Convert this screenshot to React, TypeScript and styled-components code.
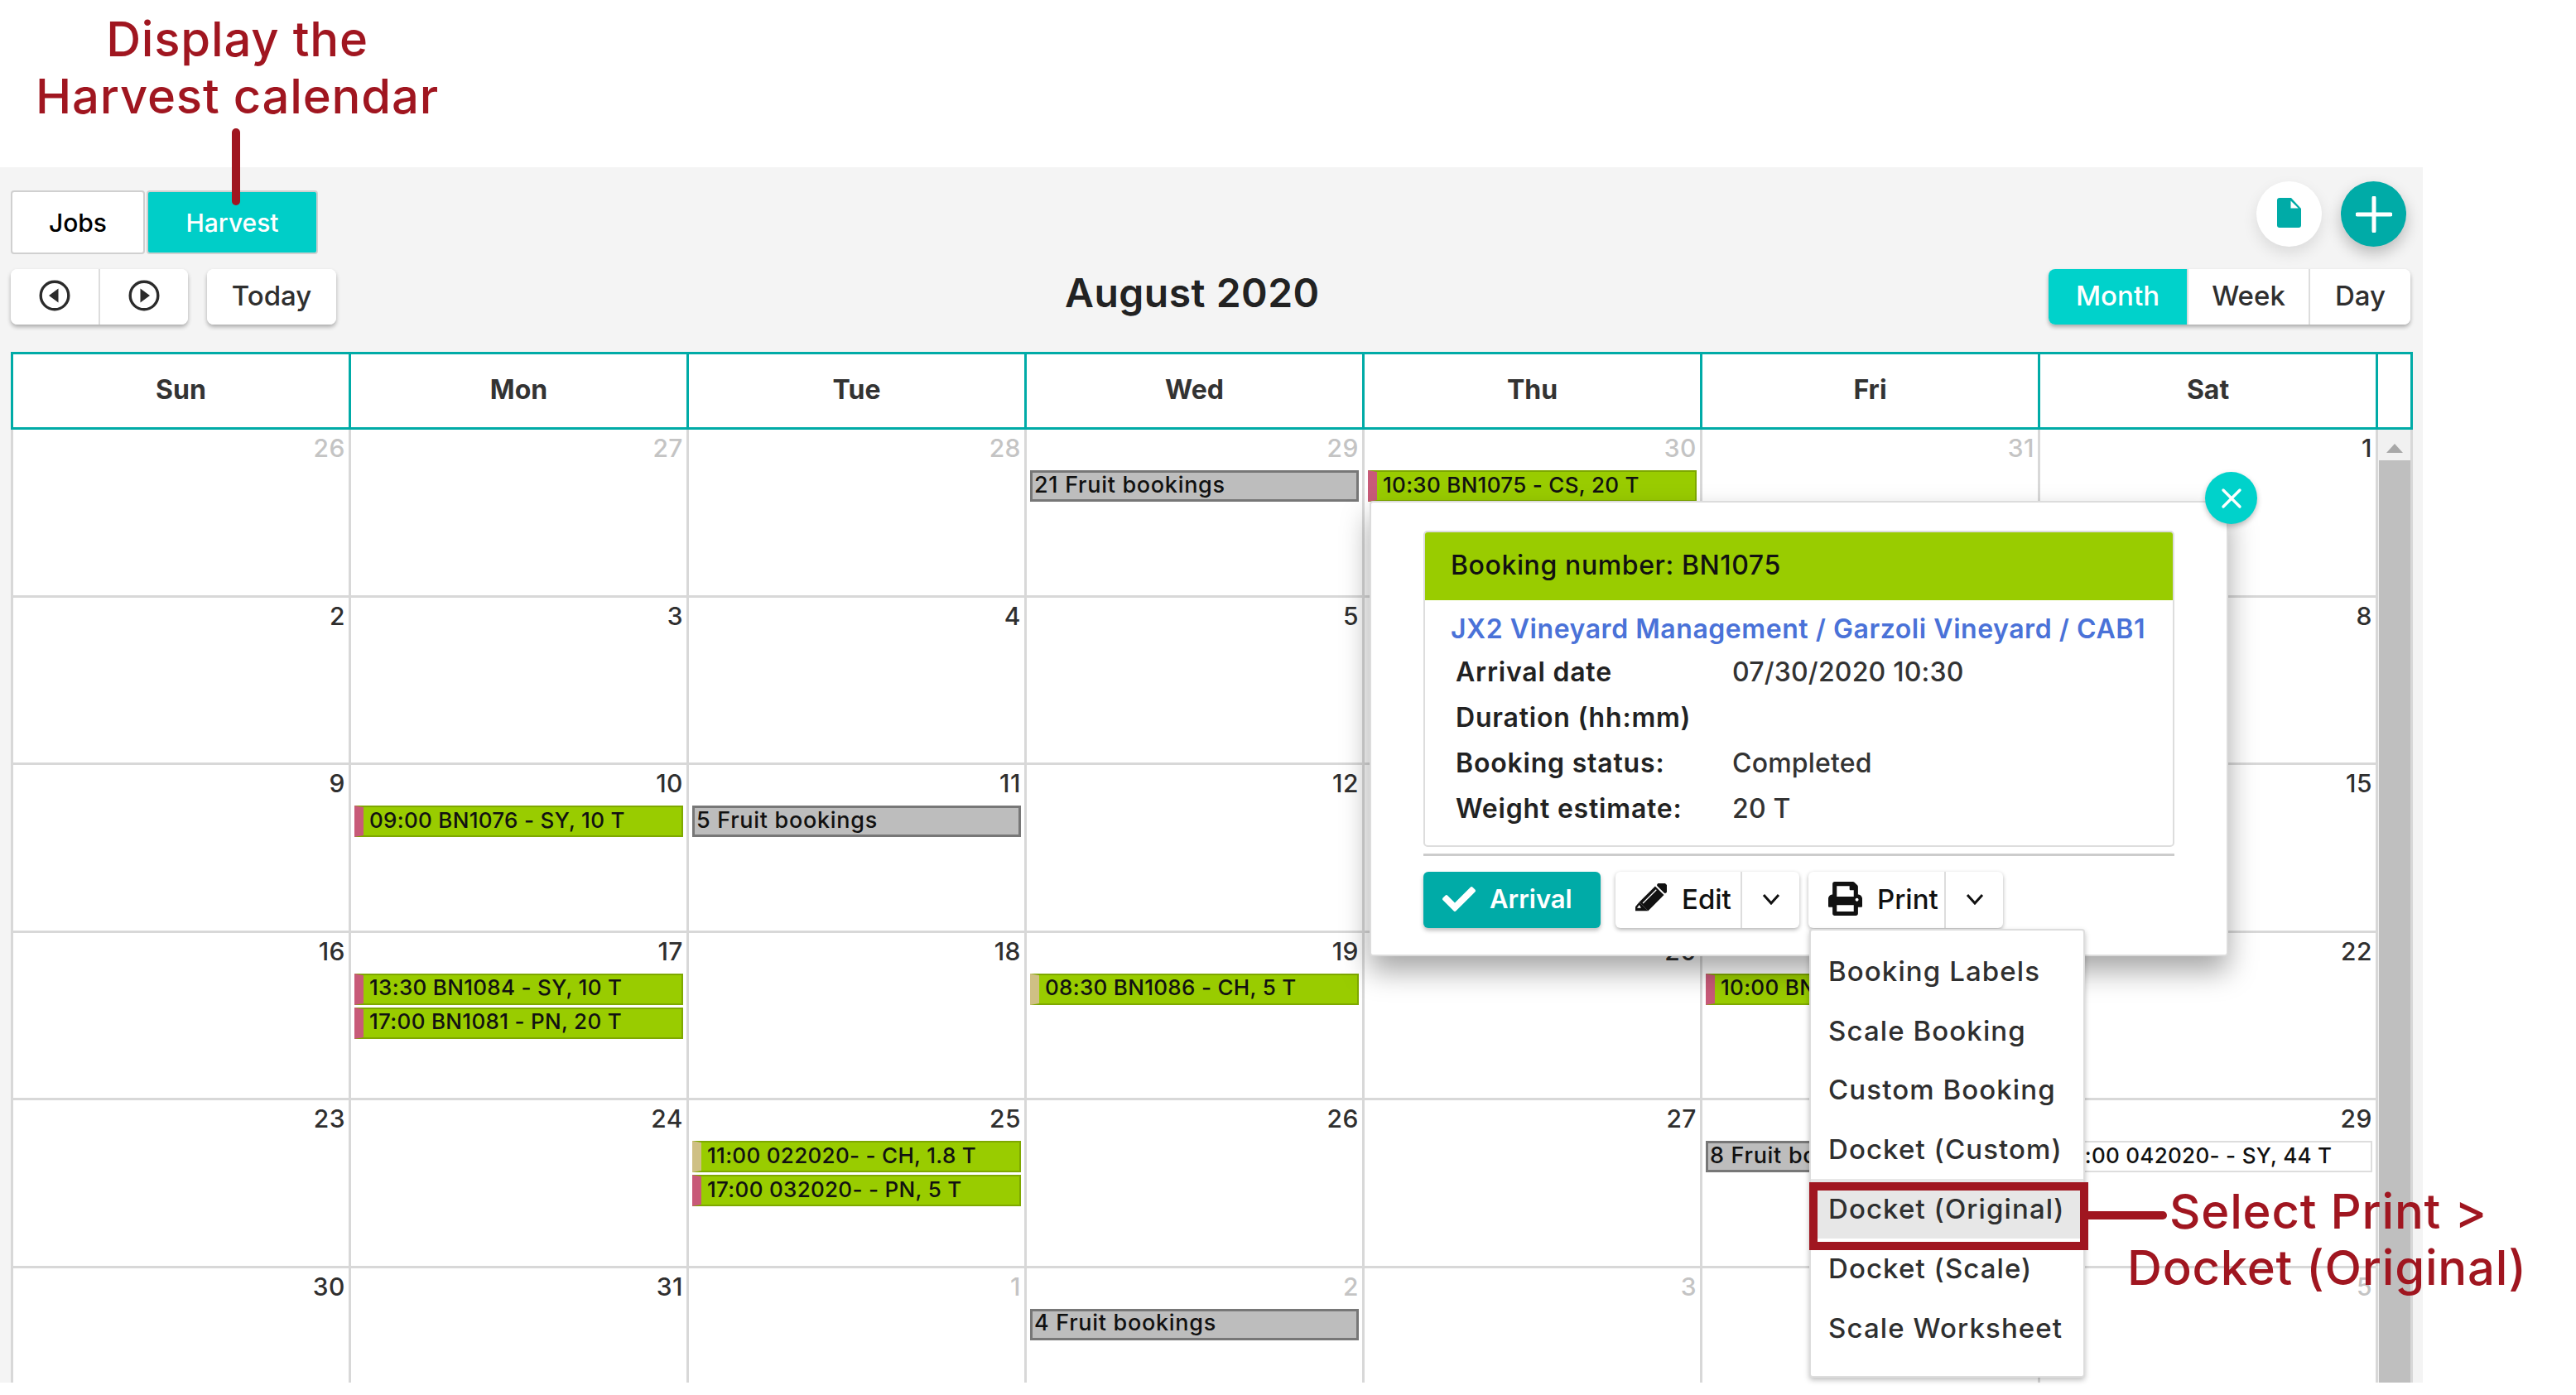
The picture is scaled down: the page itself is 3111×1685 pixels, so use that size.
import React from "react";
import styled, { createGlobalStyle } from "styled-components";
import { FaCheck, FaPrint } from "react-icons/fa";

const FONT = `Inter, "Noto Sans", sans-serif`;
const RED = "#a01620";
const TEAL = "#00aba7";
const BRIGHT = "#00d2cb";
const GREEN = "#99cc00";

const Global = createGlobalStyle`
  html, body { margin: 0; padding: 0; background: #fff; }
  body { width: 3111px; height: 1685px; overflow: hidden; font-family: ${FONT}; color: #2f2f2f; }
  * { box-sizing: border-box; }
`;

const Page = styled.div`
  position: relative;
  width: 3111px;
  height: 1685px;
  padding-top: 202px;
  overflow: hidden;
`;

const Surface = styled.main`
  width: 2926px;
  height: 1468px;
  background: #f4f4f4;
  padding: 17px 0 0 13px;
  overflow: hidden;
`;

const TopRow = styled.div`
  display: flex;
  justify-content: space-between;
  height: 106px;
  padding-right: 20px;
`;

const Tabs = styled.div`
  display: flex;
  gap: 2px;
  margin-top: 11px;
  height: 77px;
`;

const Tab = styled.div<{ $active?: boolean }>`
  width: ${(p) => (p.$active ? 207 : 162)}px;
  display: flex;
  align-items: center;
  justify-content: center;
  border: 2px solid #d0d0d0;
  border-radius: 4px;
  background: ${(p) => (p.$active ? "#00cec8" : "#fff")};
  color: ${(p) => (p.$active ? "#fff" : "#000")};
  font-size: 30px;
  font-weight: 500;
`;

const RoundGroup = styled.div`
  display: flex;
  gap: 23px;
`;

const RoundButton = styled.div<{ $filled?: boolean }>`
  width: 79px;
  height: 79px;
  border-radius: 50%;
  background: ${(p) => (p.$filled ? TEAL : "#fff")};
  display: flex;
  align-items: center;
  justify-content: center;
  box-shadow: 0 8px 18px rgba(0, 0, 0, ${(p) => (p.$filled ? 0.24 : 0.1)});
`;

const NavRow = styled.div`
  position: relative;
  display: flex;
  justify-content: space-between;
  height: 100px;
  padding-right: 15px;
`;

const LeftTools = styled.div`
  display: flex;
  gap: 23px;
  height: 67px;
`;

const ButtonGroup = styled.div`
  display: flex;
  height: 67px;
  border-radius: 8px;
  background: #fff;
  box-shadow: 0 3px 5px rgba(0, 0, 0, 0.3);
  overflow: hidden;
`;

const GroupItem = styled.div<{ $w: number; $active?: boolean }>`
  width: ${(p) => p.$w}px;
  display: flex;
  align-items: center;
  justify-content: center;
  padding-bottom: 3px;
  font-size: 33px;
  font-weight: 500;
  color: ${(p) => (p.$active ? "#fff" : "#2f2f2f")};
  background: ${(p) => (p.$active ? BRIGHT : "#fff")};
  & + & { border-left: 2px solid #ddd; }
`;

const Title = styled.h1`
  position: absolute;
  left: 1273px;
  top: 0;
  margin: 0;
  font-size: 48px;
  line-height: 58px;
  letter-spacing: 0.5px;
  font-weight: 600;
  color: #222;
`;

const Calendar = styled.section`
  width: 2901px;
  height: 1245px;
  position: relative;
`;

const HeaderRow = styled.div`
  display: grid;
  grid-template-columns: repeat(7, 408px) 1fr;
  height: 94px;
  background: #fff;
  border: 3px solid ${TEAL};
`;

const HeaderCell = styled.div`
  display: flex;
  align-items: center;
  justify-content: center;
  padding-bottom: 4px;
  font-size: 32px;
  font-weight: 700;
  color: #333;
  border-right: 3px solid ${TEAL};
  &:last-child { border-right: 0; }
`;

const Body = styled.div`
  display: flex;
  height: 1153px;
  background: #fff;
  border-left: 3px solid #d8d8d8;
  border-right: 3px solid #d8d8d8;
`;

const Grid = styled.div`
  display: grid;
  width: 2856px;
  grid-template-columns: repeat(7, 408px);
  grid-auto-rows: 202.5px;
`;

const Cell = styled.div`
  position: relative;
  min-width: 0;
  padding: 8px 4px 0 4px;
  border-right: 3px solid #d8d8d8;
  border-bottom: 3px solid #d8d8d8;
  overflow: hidden;
`;

const DateNum = styled.div<{ $muted?: boolean }>`
  height: 41px;
  line-height: 28px;
  text-align: right;
  font-size: 30px;
  letter-spacing: 0.5px;
  font-weight: 500;
  color: ${(p) => (p.$muted ? "#c4c4c4" : "#2f2f2f")};
`;

const Event = styled.div<{ $stripe?: string }>`
  position: relative;
  height: 38px;
  margin-bottom: 3px;
  padding: 0 0 4px ${(p) => (p.$stripe ? 7 : 6)}px;
  display: flex;
  align-items: center;
  white-space: nowrap;
  font-size: 26px;
  letter-spacing: 0.3px;
  font-weight: 500;
  color: #111;
  background: ${GREEN};
  border: 2px solid #7ea800;
  border-left: ${(p) => (p.$stripe ? `11px solid ${p.$stripe}` : "2px solid #7ea800")};
`;

const GroupEvent = styled(Event)`
  padding-left: 2px;
  font-size: 27px;
  letter-spacing: 0.7px;
  background: #bdbdbd;
  border: 3px solid #777;
`;

const PlainEvent = styled(Event)`
  padding-left: 20px;
  background: #fff;
  border: 2px solid #ddd;
`;

const Scrollbar = styled.div`
  width: 42px;
  background: #f1f1f1;
  display: flex;
  flex-direction: column;
  align-items: center;
`;

const ScrollArrow = styled.div`
  width: 0;
  height: 0;
  margin-top: 17px;
  margin-bottom: 9px;
  border-left: 10px solid transparent;
  border-right: 10px solid transparent;
  border-bottom: 11px solid #a8a8a8;
`;

const ScrollThumb = styled.div`
  width: 38px;
  flex: 1;
  background: #bfbfbf;
`;

const Popover = styled.div`
  position: absolute;
  left: 1654px;
  top: 605px;
  width: 1037px;
  height: 550px;
  padding: 34px 63px 0;
  background: #fff;
  border: 2px solid #dcdcdc;
  border-radius: 4px;
  box-shadow: 0 18px 34px rgba(0, 0, 0, 0.35);
`;

const CloseButton = styled.div`
  position: absolute;
  right: -37px;
  top: -37px;
  width: 63px;
  height: 63px;
  border-radius: 50%;
  background: ${BRIGHT};
  display: flex;
  align-items: center;
  justify-content: center;
  box-shadow: 0 3px 6px rgba(0, 0, 0, 0.25);
`;

const Card = styled.div`
  height: 382px;
  border: 2px solid #ddd;
  border-radius: 5px;
  overflow: hidden;
`;

const CardHead = styled.div`
  height: 82px;
  background: ${GREEN};
  display: flex;
  align-items: center;
  padding: 0 0 3px 31px;
  font-size: 32px;
  letter-spacing: 0.6px;
  font-weight: 500;
  color: #111;
`;

const CardLink = styled.div`
  margin: 16px 0 0 31px;
  height: 38px;
  line-height: 38px;
  font-size: 32px;
  letter-spacing: 0.55px;
  font-weight: 600;
  color: #4a72d8;
  white-space: nowrap;
`;

const Fields = styled.dl`
  display: grid;
  grid-template-columns: 334px 1fr;
  grid-auto-rows: 55px;
  align-items: center;
  margin: 5px 0 0 37px;
`;

const Label = styled.dt`
  font-size: 32px;
  letter-spacing: 0.8px;
  font-weight: 600;
  color: #222;
`;

const Value = styled.dd`
  margin: 0;
  font-size: 32px;
  letter-spacing: 0.2px;
  font-weight: 500;
  color: #333;
`;

const Rule = styled.hr`
  margin: 8px 0 0;
  height: 3px;
  border: 0;
  background: #ccc;
`;

const Actions = styled.div`
  display: flex;
  margin-top: 19px;
`;

const ArrivalButton = styled.div`
  width: 214px;
  height: 68px;
  margin-right: 18px;
  border-radius: 6px;
  background: ${TEAL};
  color: #fff;
  display: flex;
  align-items: center;
  padding: 0 0 3px 23px;
  gap: 17px;
  font-size: 31px;
  font-weight: 600;
  box-shadow: 0 3px 5px rgba(0, 0, 0, 0.25);
`;

const SplitButton = styled.div<{ $w: number }>`
  position: relative;
  width: ${(p) => p.$w}px;
  height: 68px;
  margin-right: 11px;
  border-radius: 6px;
  background: #fff;
  display: flex;
  box-shadow: 0 2px 5px rgba(0, 0, 0, 0.3);
`;

const SplitMain = styled.div`
  flex: 1;
  display: flex;
  align-items: center;
  padding: 0 0 3px 24px;
  gap: 18px;
  font-size: 33px;
  font-weight: 500;
  color: #111;
`;

const SplitCaret = styled.div`
  width: 71px;
  padding-bottom: 3px;
  display: flex;
  align-items: center;
  justify-content: center;
  border-left: 2px solid #ddd;
`;

const Menu = styled.ul`
  position: absolute;
  left: 1px;
  top: 69px;
  width: 333px;
  height: 542px;
  margin: 0;
  padding: 13px 0 0;
  list-style: none;
  background: #fff;
  border: 2px solid #ddd;
  border-radius: 4px;
  box-shadow: 0 3px 6px rgba(0, 0, 0, 0.25);
  z-index: 3;
`;

const MenuItem = styled.li<{ $selected?: boolean }>`
  height: 71.8px;
  display: flex;
  align-items: center;
  padding-left: 21px;
  white-space: nowrap;
  font-size: 33px;
  letter-spacing: 1.1px;
  font-weight: 500;
  color: #2f2f2f;
  background: ${(p) => (p.$selected ? "#e7e7e7" : "transparent")};
`;

const Callout = styled.div<{ $x: number; $y: number; $w?: number }>`
  position: absolute;
  left: ${(p) => p.$x}px;
  top: ${(p) => p.$y}px;
  ${(p) => (p.$w ? `width: ${p.$w}px;` : "")}
  font-size: 58px;
  letter-spacing: 0.8px;
  font-weight: 500;
  line-height: 69px;
  color: ${RED};
  white-space: pre;
  text-align: center;
  z-index: 5;
`;

const Pointer = styled.div`
  position: absolute;
  left: 280px;
  top: 155px;
  width: 10px;
  height: 93px;
  border-radius: 5px;
  background: ${RED};
  z-index: 5;
`;

const HighlightBox = styled.div`
  position: absolute;
  left: 2185px;
  top: 1428px;
  width: 337px;
  height: 82px;
  border: 10px solid ${RED};
  z-index: 5;
`;

const Connector = styled.div`
  position: absolute;
  left: 2522px;
  top: 1463px;
  width: 95px;
  height: 10px;
  border-radius: 0 5px 5px 0;
  background: ${RED};
  z-index: 5;
`;

type Ev = { t: string; s?: string; k?: "group" | "plain" };
type Day = { d: number; m?: boolean; e?: Ev[] };

const R = "#c85a78";
const C = "#cfc084";

const days: Day[] = [
  { d: 26, m: true }, { d: 27, m: true }, { d: 28, m: true },
  { d: 29, m: true, e: [{ t: "21 Fruit bookings", k: "group" }] },
  { d: 30, m: true, e: [{ t: "10:30 BN1075 - CS, 20 T", s: R }] },
  { d: 31, m: true }, { d: 1 },
  { d: 2 }, { d: 3 }, { d: 4 }, { d: 5 }, { d: 6 }, { d: 7 }, { d: 8 },
  { d: 9 },
  { d: 10, e: [{ t: "09:00 BN1076 - SY, 10 T", s: R }] },
  { d: 11, e: [{ t: "5 Fruit bookings", k: "group" }] },
  { d: 12 }, { d: 13 }, { d: 14 }, { d: 15 },
  { d: 16 },
  { d: 17, e: [{ t: "13:30 BN1084 - SY, 10 T", s: R }, { t: "17:00 BN1081 - PN, 20 T", s: R }] },
  { d: 18 },
  { d: 19, e: [{ t: "08:30 BN1086 - CH, 5 T", s: C }] },
  { d: 20 },
  { d: 21, e: [{ t: "10:00 BN1085 - SY, 10 T", s: R }] },
  { d: 22 },
  { d: 23 }, { d: 24 },
  { d: 25, e: [{ t: "11:00 022020- - CH, 1.8 T", s: C }, { t: "17:00 032020- - PN, 5 T", s: R }] },
  { d: 26 }, { d: 27 },
  { d: 28, e: [{ t: "8 Fruit bookings", k: "group" }] },
  { d: 29, e: [{ t: "13:00 042020- - SY, 44 T", k: "plain" }] },
  { d: 30 }, { d: 31 }, { d: 1, m: true },
  { d: 2, m: true, e: [{ t: "4 Fruit bookings", k: "group" }] },
  { d: 3, m: true }, { d: 4, m: true }, { d: 5, m: true },
];

const CircleArrow = ({ left }: { left?: boolean }) => (
  <svg width="38" height="38" viewBox="0 0 38 38">
    <circle cx="19" cy="19" r="16.8" fill="none" stroke="#2b2b2b" strokeWidth="3.4" />
    <path d={left ? "M23.5 10.5v17L12 19z" : "M14.5 10.5v17L26 19z"} fill="#2b2b2b" />
  </svg>
);

const Caret = () => (
  <svg width="22" height="14" viewBox="0 0 22 14">
    <path d="M2 2l9 10 9-10" fill="none" stroke="#111" strokeWidth="3" />
  </svg>
);

const FileGlyph = () => (
  <svg width="29" height="36" viewBox="0 0 29 36" style={{ marginBottom: 4 }}>
    <path d="M3 0h14l12 13v20a3 3 0 0 1-3 3H3a3 3 0 0 1-3-3V3a3 3 0 0 1 3-3z" fill={TEAL} />
    <path d="M16.5 3.4L25.7 12.4H16.5z" fill="#fff" />
  </svg>
);

const PlusGlyph = () => (
  <svg width="44" height="44" viewBox="0 0 44 44">
    <path d="M22 2v40M2 22h40" stroke="#fff" strokeWidth="5" strokeLinecap="round" />
  </svg>
);

const CloseGlyph = () => (
  <svg width="28" height="28" viewBox="0 0 28 28">
    <path d="M4 4l20 20M24 4L4 24" stroke="#fff" strokeWidth="3.4" strokeLinecap="round" />
  </svg>
);

const PencilGlyph = () => (
  <svg width="38" height="38" viewBox="0 0 38 38">
    <g transform="translate(28.5 9.5) rotate(45)">
      <rect x="-7.5" y="-12" width="15" height="9" rx="2" fill="#111" />
      <rect x="-7.5" y="-1" width="15" height="27" fill="#111" />
      <path d="M-7.5 26H7.5L-6.5 40z" fill="#111" />
      <path d="M-3.5 1V24" stroke="#fff" strokeWidth="1.2" />
      <path d="M-5 28.5L-1 29.5L-4.5 33z" fill="#fff" />
    </g>
  </svg>
);

const renderEvent = (e: Ev, i: number) => {
  if (e.k === "group") return <GroupEvent key={i}>{e.t}</GroupEvent>;
  if (e.k === "plain") return <PlainEvent key={i}>{e.t}</PlainEvent>;
  return <Event key={i} $stripe={e.s}>{e.t}</Event>;
};

export default function App() {
  return (
    <Page>
      <Global />
      <Surface>
        <TopRow>
          <Tabs>
            <Tab>Jobs</Tab>
            <Tab $active>Harvest</Tab>
          </Tabs>
          <RoundGroup>
            <RoundButton><FileGlyph /></RoundButton>
            <RoundButton $filled><PlusGlyph /></RoundButton>
          </RoundGroup>
        </TopRow>
        <NavRow>
          <LeftTools>
            <ButtonGroup>
              <GroupItem $w={106}><CircleArrow left /></GroupItem>
              <GroupItem $w={108}><CircleArrow /></GroupItem>
            </ButtonGroup>
            <ButtonGroup>
              <GroupItem $w={156}>Today</GroupItem>
            </ButtonGroup>
          </LeftTools>
          <Title>August 2020</Title>
          <ButtonGroup>
            <GroupItem $w={167} $active>Month</GroupItem>
            <GroupItem $w={147}>Week</GroupItem>
            <GroupItem $w={123}>Day</GroupItem>
          </ButtonGroup>
        </NavRow>
        <Calendar>
          <HeaderRow>
            {["Sun", "Mon", "Tue", "Wed", "Thu", "Fri", "Sat"].map((d) => (
              <HeaderCell key={d}>{d}</HeaderCell>
            ))}
            <HeaderCell />
          </HeaderRow>
          <Body>
            <Grid>
              {days.map((day, i) => (
                <Cell key={i}>
                  <DateNum $muted={day.m}>{day.d}</DateNum>
                  {day.e?.map(renderEvent)}
                </Cell>
              ))}
            </Grid>
            <Scrollbar>
              <ScrollArrow />
              <ScrollThumb />
            </Scrollbar>
          </Body>
        </Calendar>
      </Surface>

      <Popover>
        <CloseButton><CloseGlyph /></CloseButton>
        <Card>
          <CardHead>Booking number: BN1075</CardHead>
          <CardLink>JX2 Vineyard Management / Garzoli Vineyard / CAB1</CardLink>
          <Fields>
            <Label>Arrival date</Label><Value>07/30/2020 10:30</Value>
            <Label>Duration (hh:mm)</Label><Value />
            <Label>Booking status:</Label><Value>Completed</Value>
            <Label>Weight estimate:</Label><Value>20 T</Value>
          </Fields>
        </Card>
        <Rule />
        <Actions>
          <ArrivalButton><FaCheck size={40} />Arrival</ArrivalButton>
          <SplitButton $w={222}>
            <SplitMain><PencilGlyph />Edit</SplitMain>
            <SplitCaret><Caret /></SplitCaret>
          </SplitButton>
          <SplitButton $w={235}>
            <SplitMain><FaPrint size={41} />Print</SplitMain>
            <SplitCaret><Caret /></SplitCaret>
            <Menu>
              <MenuItem>Booking Labels</MenuItem>
              <MenuItem>Scale Booking</MenuItem>
              <MenuItem>Custom Booking</MenuItem>
              <MenuItem>Docket (Custom)</MenuItem>
              <MenuItem $selected>Docket (Original)</MenuItem>
              <MenuItem>Docket (Scale)</MenuItem>
              <MenuItem>Scale Worksheet</MenuItem>
            </Menu>
          </SplitButton>
        </Actions>
      </Popover>

      <Callout $x={0} $y={13} $w={573}>{"Display the\nHarvest calendar"}</Callout>
      <Pointer />
      <HighlightBox />
      <Connector />
      <Callout $x={2620} $y={1429}>Select Print &gt;</Callout>
      <Callout $x={2569} $y={1497}>Docket (Original)</Callout>
    </Page>
  );
}
